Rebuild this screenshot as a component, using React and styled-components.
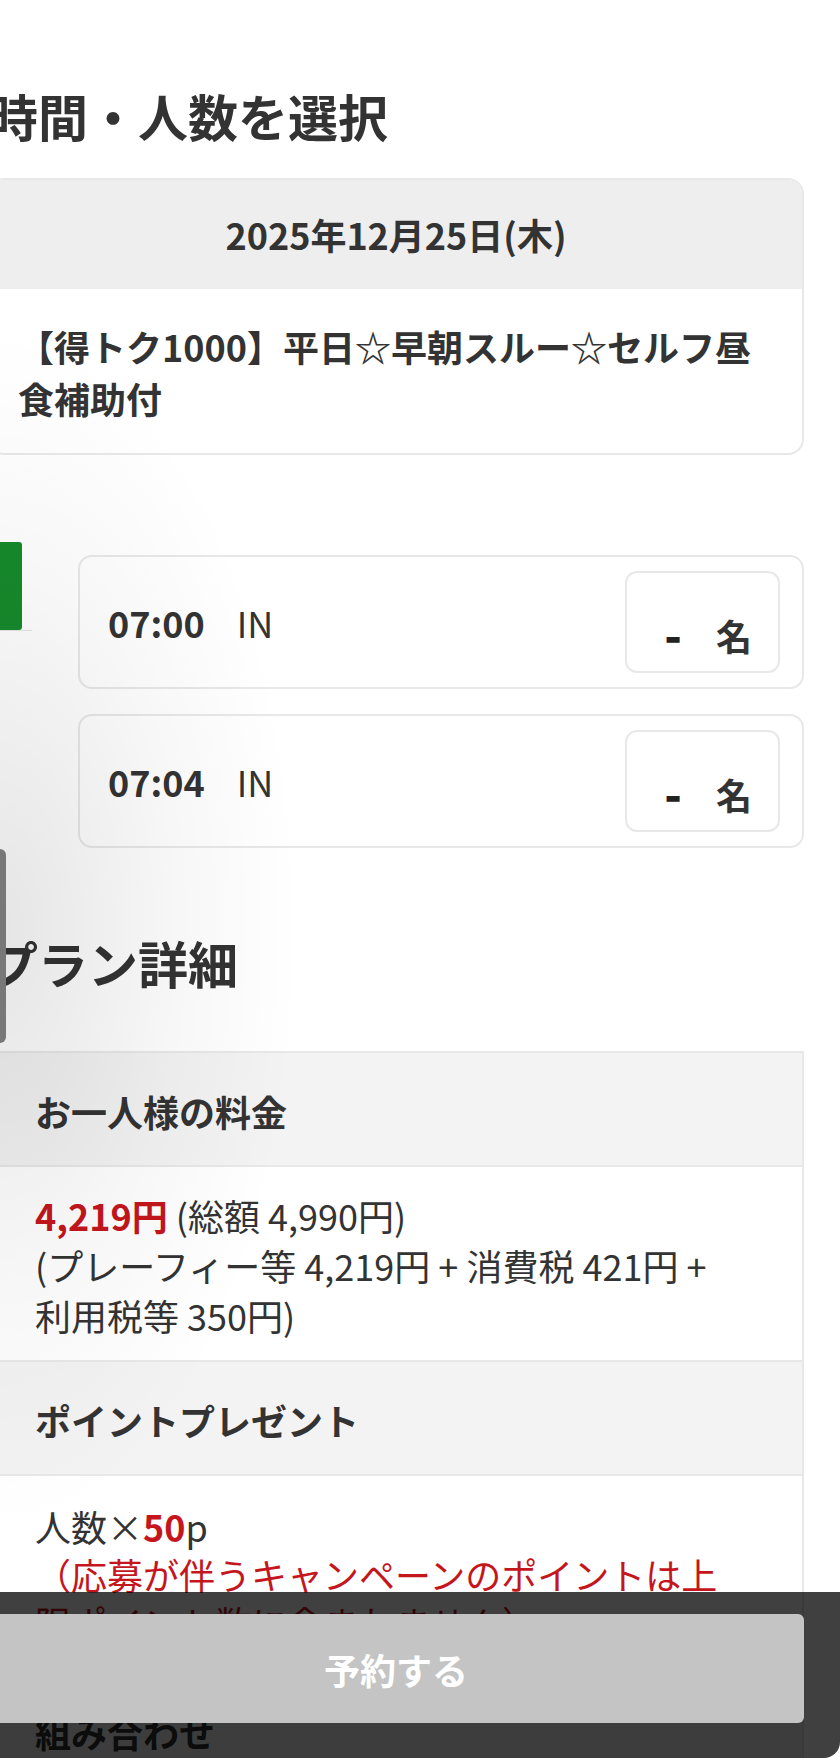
import styled, { createGlobalStyle } from 'styled-components'

const GlobalStyle = createGlobalStyle`
	html, body {
		margin: 0;
		padding: 0;
		background: #fff;
	}
	body {
		font-family: 'Noto Sans CJK JP', 'Noto Sans', sans-serif;
		color: #333;
	}
	* {
		box-sizing: border-box;
	}
`

const slots = [
	{ time: '07:00', course: 'IN' },
	{ time: '07:04', course: 'IN' },
]

const Page = styled.div`
	position: relative;
	height: 1758px;
	overflow: hidden;
`

const Content = styled.main`
	margin: 0 36px 0 -12px;
	padding: 82px 0 200px;
`

const SectionTitle = styled.h2`
	margin: ${(p) => p.$top || 0}px 0 0;
	font-size: 50px;
	line-height: 67px;
	font-weight: 700;
	white-space: nowrap;
`

const PlanCard = styled.div`
	margin-top: 29px;
	border: 2px solid #e8e8e8;
	border-radius: 16px;
	overflow: hidden;
`

const CardHead = styled.div`
	background: #eeeeee;
	text-align: center;
	font-size: 36px;
	line-height: 50px;
	font-weight: 700;
	padding: 29px 0 30px;
`

const CardBody = styled.div`
	padding: 31px 28px 29px 28px;
	font-size: 36px;
	line-height: 52px;
	font-weight: 700;
`

const SlotSection = styled.div`
	margin-top: 87px;
	display: flex;
	align-items: flex-start;
	gap: 46px;
`

const DayTabs = styled.div`
	width: 44px;
	flex: none;
	border-bottom: 1px solid #e4e4e4;
`

const DayTab = styled.div`
	width: 34px;
	height: 88px;
	background: #178a2c;
	border-radius: 0 3px 3px 0;
`

const SlotList = styled.div`
	flex: 1;
	display: flex;
	flex-direction: column;
	gap: 25px;
	padding-top: 13px;
`

const SlotRow = styled.div`
	height: 134px;
	border: 2px solid #e8e8e8;
	border-radius: 14px;
	display: flex;
	align-items: center;
	padding: 0 22px 0 28px;
	font-size: 36px;
	line-height: 50px;
`

const SlotTime = styled.span`
	font-weight: 700;
`

const SlotCourse = styled.span`
	margin-left: 32px;
	font-weight: 400;
`

const CountBox = styled.div`
	margin-left: auto;
	width: 155px;
	height: 102px;
	border: 2px solid #e8e8e8;
	border-radius: 12px;
	display: flex;
	align-items: center;
	justify-content: flex-end;
	gap: 34px;
	padding: 26px 26px 0 0;
	font-weight: 700;
`

const CountValue = styled.span`
	font-size: 46px;
	font-weight: 900;
	color: #222;
	margin-top: -4px;
`

const DetailTable = styled.dl`
	margin: 55px 0 0;
	border-top: 2px solid #e8e8e8;
	border-right: 2px solid #e8e8e8;
	font-size: 36px;
`

const DetailHead = styled.dt`
	background: #f3f3f3;
	padding: 33px 24px 29px 47px;
	line-height: 50px;
	font-weight: 700;
	border-bottom: 2px solid #e8e8e8;
`

const DetailBody = styled.dd`
	margin: 0;
	padding: ${(p) => p.$pad || '23px 68px 20px 47px'};
	line-height: ${(p) => p.$lh || 50}px;
	border-bottom: 2px solid #e8e8e8;
`

const Red = styled.span`
	color: #c4161c;
	font-weight: ${(p) => (p.$bold ? 700 : 400)};
`

const Note = styled.div`
	color: #c4161c;
`

const EdgeShade = styled.div`
	position: absolute;
	inset: 0;
	pointer-events: none;
	background: radial-gradient(ellipse 300px 600px at 0px 930px, rgba(0, 0, 0, 0.1), rgba(0, 0, 0, 0.03) 60%, rgba(0, 0, 0, 0) 100%);
`

const EdgeHandle = styled.div`
	position: absolute;
	left: 0;
	top: 849px;
	width: 6px;
	height: 194px;
	background: #787878;
	border-radius: 0 6px 6px 0;
`

const BottomBar = styled.div`
	position: absolute;
	left: 0;
	right: 0;
	bottom: 0;
	height: 166px;
	padding-top: 22px;
	background: rgba(0, 0, 0, 0.75);
	border-bottom-right-radius: 16px;
`

const ReserveButton = styled.button`
	display: block;
	width: calc(100% - 24px);
	margin: 0 36px 0 -12px;
	height: 109px;
	border: none;
	border-radius: 6px;
	background: #c4c4c4;
	color: #fff;
	font-family: inherit;
	font-size: 36px;
	font-weight: 700;
`

const App = () => {
	return (
		<Page>
			<GlobalStyle />
			<Content>
				<SectionTitle>時間・人数を選択</SectionTitle>
				<PlanCard>
					<CardHead>2025年12月25日(木)</CardHead>
					<CardBody>【得トク1000】平日☆早朝スルー☆セルフ昼食補助付</CardBody>
				</PlanCard>

				<SlotSection>
					<DayTabs>
						<DayTab />
					</DayTabs>
					<SlotList>
						{slots.map((s) => (
							<SlotRow key={s.time}>
								<SlotTime>{s.time}</SlotTime>
								<SlotCourse>{s.course}</SlotCourse>
								<CountBox>
									<CountValue>-</CountValue>
									<span>名</span>
								</CountBox>
							</SlotRow>
						))}
					</SlotList>
				</SlotSection>

				<SectionTitle $top={81}>プラン詳細</SectionTitle>
				<DetailTable>
					<DetailHead>お一人様の料金</DetailHead>
					<DetailBody>
						<Red $bold>4,219円</Red> (総額 4,990円)
						<br />
						(プレーフィー等 4,219円 + 消費税 421円 + 利用税等 350円)
					</DetailBody>
					<DetailHead>ポイントプレゼント</DetailHead>
					<DetailBody $pad='26px 68px 26px 47px' $lh={48}>
						人数×<Red $bold>50</Red>p
						<Note>（応募が伴うキャンペーンのポイントは上限ポイント数に含まれません）</Note>
					</DetailBody>
					<DetailHead>組み合わせ</DetailHead>
				</DetailTable>
			</Content>
			<EdgeShade />
			<EdgeHandle />
			<BottomBar>
				<ReserveButton>予約する</ReserveButton>
			</BottomBar>
		</Page>
	)
}

export default App
